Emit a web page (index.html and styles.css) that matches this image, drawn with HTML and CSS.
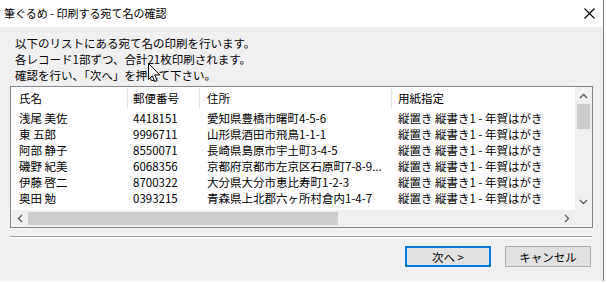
FILE: index.html
```html
<!DOCTYPE html>
<html lang="ja">
<head>
  <meta charset="UTF-8">
  <title>筆ぐるめ - 印刷する宛て名の確認</title>
  <link rel="stylesheet" href="styles.css">
</head>
<body>
  <div class="window">
    <div class="titlebar">
      <span class="title">筆ぐるめ - 印刷する宛て名の確認</span>
      <svg class="close" width="11" height="11" viewBox="0 0 11 11">
        <path d="M0.5 0.5 L10.5 10.5 M10.5 0.5 L0.5 10.5" stroke="#000" stroke-width="1.1" fill="none"/>
      </svg>
    </div>

    <div class="message">
      <p>以下のリストにある宛て名の印刷を行います。</p>
      <p>各レコード1部ずつ、合計21枚印刷されます。</p>
      <p>確認を行い、「次へ」を押して下さい。</p>
    </div>

    <div class="listbox">
      <div class="table">
        <div class="row header">
          <div class="cell name">氏名</div>
          <div class="cell zip">郵便番号</div>
          <div class="cell addr">住所</div>
          <div class="cell paper">用紙指定</div>
        </div>
        <div class="row">
          <div class="cell name">浅尾 美佐</div>
          <div class="cell zip">4418151</div>
          <div class="cell addr">愛知県豊橋市曙町4-5-6</div>
          <div class="cell paper">縦置き 縦書き1 - 年賀はがき</div>
        </div>
        <div class="row">
          <div class="cell name">東 五郎</div>
          <div class="cell zip">9996711</div>
          <div class="cell addr">山形県酒田市飛鳥1-1-1</div>
          <div class="cell paper">縦置き 縦書き1 - 年賀はがき</div>
        </div>
        <div class="row">
          <div class="cell name">阿部 静子</div>
          <div class="cell zip">8550071</div>
          <div class="cell addr">長崎県島原市宇土町3-4-5</div>
          <div class="cell paper">縦置き 縦書き1 - 年賀はがき</div>
        </div>
        <div class="row">
          <div class="cell name">磯野 紀美</div>
          <div class="cell zip">6068356</div>
          <div class="cell addr">京都府京都市左京区石原町7-8-9...</div>
          <div class="cell paper">縦置き 縦書き1 - 年賀はがき</div>
        </div>
        <div class="row">
          <div class="cell name">伊藤 啓二</div>
          <div class="cell zip">8700322</div>
          <div class="cell addr">大分県大分市恵比寿町1-2-3</div>
          <div class="cell paper">縦置き 縦書き1 - 年賀はがき</div>
        </div>
        <div class="row">
          <div class="cell name">奥田 勉</div>
          <div class="cell zip">0393215</div>
          <div class="cell addr">青森県上北郡六ヶ所村倉内1-4-7</div>
          <div class="cell paper">縦置き 縦書き1 - 年賀はがき</div>
        </div>
      </div>

      <div class="vscroll">
        <div class="arrow">
          <svg width="9" height="6" viewBox="0 0 9 6"><path d="M1 5 L4.5 1.5 L8 5" stroke="#606060" stroke-width="1.4" fill="none"/></svg>
        </div>
        <div class="vthumb"></div>
        <div class="vspace"></div>
        <div class="arrow">
          <svg width="9" height="6" viewBox="0 0 9 6"><path d="M1 1 L4.5 4.5 L8 1" stroke="#606060" stroke-width="1.4" fill="none"/></svg>
        </div>
      </div>

      <div class="hscroll">
        <div class="arrow">
          <svg width="6" height="9" viewBox="0 0 6 9"><path d="M5 1 L1.5 4.5 L5 8" stroke="#606060" stroke-width="1.4" fill="none"/></svg>
        </div>
        <div class="hthumb"></div>
        <div class="hspace"></div>
        <div class="arrow">
          <svg width="6" height="9" viewBox="0 0 6 9"><path d="M1 1 L4.5 4.5 L1 8" stroke="#606060" stroke-width="1.4" fill="none"/></svg>
        </div>
      </div>
      <div class="corner"></div>
    </div>

    <div class="separator"></div>

    <div class="buttons">
      <button class="default">次へ &gt;</button>
      <button>キャンセル</button>
    </div>

    <!-- mouse pointer left over the message text -->
    <svg class="cursor" width="13" height="20" viewBox="0 0 13 20">
      <path d="M0.5 0.5 L0.5 16.5 L4.3 12.8 L6.8 18.6 L9.2 17.6 L6.8 11.9 L11.8 11.9 Z" fill="#fff" stroke="#000" stroke-width="1"/>
    </svg>
  </div>
</body>
</html>
```

FILE: styles.css
```css
body {
    margin: 0;
    width: 607px;
    height: 283px;
    overflow: hidden;
    background-color: #fff;
    font-family: "Noto Sans CJK JP", "Noto Sans", sans-serif;
    font-size: 11.5px;
    color: #000;
}

.window {
    position: relative;
    width: 603px;
    height: 283px;
    background-color: #f0f0f0;
    border-right: 1px solid #7a7a7a;
}

.titlebar {
    height: 29px;
    background-color: #fff;
    display: flex;
    align-items: center;
    justify-content: space-between;
    padding: 0 8px 0 4px;
    margin-top: -2px;
}

.title {
    font-size: 11px;
}

.close {
    margin-top: 2px;
}

.message {
    padding: 8px 15px 0 15px;
    line-height: 16px;
}

.message p {
    margin: 0;
    height: 16px;
}

.listbox {
    margin: 3px 10px 0 10px;
    height: 140px;
    border: 1px solid #828790;
    background-color: #fff;
    display: grid;
    grid-template-columns: 1fr 17px;
    grid-template-rows: 1fr 17px;
}

.table {
    overflow: hidden;
    white-space: nowrap;
}

.row {
    display: flex;
    height: 16px;
    line-height: 16px;
}

.row.header {
    height: 23px;
    line-height: 22px;
}

.cell {
    flex: none;
    box-sizing: border-box;
    padding-left: 6px;
    overflow: hidden;
}

.header .cell {
    border-right: 1px solid #e5e5e5;
    height: 20px;
    margin-top: 1px;
    line-height: 20px;
}

.name {
    width: 117px;
    padding-left: 8px;
}

.zip {
    width: 72px;
    padding-left: 5px;
}

.addr {
    width: 192px;
    padding-left: 7px;
}

.paper {
    width: 200px;
}

.vscroll {
    background-color: #f0f0f0;
    display: flex;
    flex-direction: column;
}

.hscroll {
    background-color: #f0f0f0;
    display: flex;
}

.arrow {
    width: 17px;
    height: 17px;
    flex: none;
    display: flex;
    align-items: center;
    justify-content: center;
}

.vthumb {
    height: 25px;
    margin: 0 2px;
    background-color: #cdcdcd;
}

.vspace,
.hspace {
    flex: 1;
}

.hthumb {
    width: 310px;
    margin: 2px 0;
    background-color: #cdcdcd;
}

.corner {
    background-color: #f0f0f0;
}

.separator {
    margin: 8px 11px 0 10px;
    border-top: 1px solid #a0a0a0;
    border-bottom: 1px solid #fff;
}

.buttons {
    display: flex;
    justify-content: flex-end;
    gap: 14px;
    margin: 8px 12px 0 0;
}

button {
    width: 86px;
    height: 21px;
    padding: 0;
    background-color: #e1e1e1;
    border: 1px solid #adadad;
    font-family: inherit;
    font-size: 11.5px;
    color: #000;
}

button.default {
    border: 2px solid #0078d7;
}

.cursor {
    position: absolute;
    left: 148px;
    top: 65px;
}
```
